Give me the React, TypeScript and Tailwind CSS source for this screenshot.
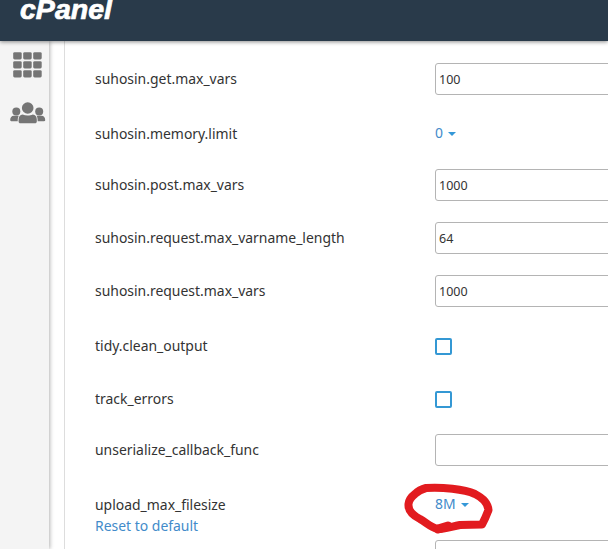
type Setting = {
  name: string;
  kind: "input" | "select" | "checkbox";
  value?: string;
  reset?: boolean;
  circled?: boolean;
};

const settings: Setting[] = [
  { name: "suhosin.get.max_vars", kind: "input", value: "100" },
  { name: "suhosin.memory.limit", kind: "select", value: "0" },
  { name: "suhosin.post.max_vars", kind: "input", value: "1000" },
  { name: "suhosin.request.max_varname_length", kind: "input", value: "64" },
  { name: "suhosin.request.max_vars", kind: "input", value: "1000" },
  { name: "tidy.clean_output", kind: "checkbox" },
  { name: "track_errors", kind: "checkbox" },
  { name: "unserialize_callback_func", kind: "input", value: "" },
  { name: "upload_max_filesize", kind: "select", value: "8M", reset: true, circled: true },
  { name: "", kind: "input", value: "" },
];

const Logo = () => (
  <svg className="ml-5 block" width="100" height="24" viewBox="0 0 100 24" aria-label="cPanel">
    <text
      x="0"
      y="19.3"
      textLength="92"
      lengthAdjust="spacingAndGlyphs"
      fill="#fff"
      stroke="#fff"
      strokeWidth="0.7"
      className="font-['Liberation_Sans',sans-serif] text-[27px] font-bold italic"
    >
      cPanel
    </text>
  </svg>
);

const GridIcon = () => (
  <svg width="29" height="26" viewBox="0 0 29 26" fill="#757575">
    {[0, 9, 18].map((y) =>
      [0, 10, 20].map((x) => (
        <rect key={`${x}-${y}`} x={x + 0.2} y={y + 0.2} width="8.5" height="7.3" rx="1.4" />
      ))
    )}
  </svg>
);

const UsersIcon = () => (
  <svg width="36" height="22" viewBox="0 0 36 22" fill="#757575">
    <circle cx="6.3" cy="9.4" r="4" />
    <circle cx="29.2" cy="9.4" r="4" />
    <path d="M3.8 13.8h5.1c-.8 1-1.2 2.6-1.2 5.4H1.3c-.8 0-1.1-.4-1.1-1.2 0-2.4 1.4-4.2 3.6-4.2z" />
    <path d="M31.6 13.8h-5.1c.8 1 1.2 2.6 1.2 5.4h6.4c.8 0 1.1-.4 1.1-1.2 0-2.4-1.4-4.2-3.6-4.2z" />
    <circle cx="17.7" cy="6" r="5.8" />
    <path d="M12.6 12.5c2.8 1.3 7.4 1.3 10.2 0 2.5 0 4 2.2 4 5.1v1.8c0 1.2-.7 1.8-1.8 1.8H10.4c-1.1 0-1.8-.6-1.8-1.8v-1.8c0-2.9 1.5-5.1 4-5.1z" />
  </svg>
);

const Scribble = () => (
  <svg
    className="absolute -left-[35px] -top-[8px]"
    width="96"
    height="60"
    viewBox="400 479 96 60"
    fill="none"
    stroke="#e21b1f"
    strokeWidth="8"
    strokeLinecap="round"
    strokeLinejoin="round"
  >
    <path d="M415 494C418 491 422 489 426 488C442 487 464 489 475 494C483 498 488 504 488.500 510C487 514 485 519 482 524.500L460 525C450 527 444 529 438 529C430 527 427 523 420 519C412 515 408 510 408.500 504C409 500 411 497 415 494Z" />
    <path d="M438 529L448 526" strokeWidth="9" />
  </svg>
);

const Control = ({ setting }: { setting: Setting }) => {
  if (setting.kind === "input") {
    return (
      <input
        type="text"
        defaultValue={setting.value}
        className="block h-8 w-[240px] rounded-[3px] border border-[#b4b4b4] bg-white px-[3px] pt-px text-[12.5px] text-[#333] outline-none"
      />
    );
  }
  if (setting.kind === "checkbox") {
    return (
      <button
        role="checkbox"
        aria-checked="false"
        aria-label={setting.name}
        className="mt-[10px] block size-[17px] rounded-[2px] border-2 border-[#3498d4]"
      />
    );
  }
  return (
    <div className="relative h-8 w-[240px]">
      <button className="flex h-[34px] items-center gap-[5px] text-[#428bca]">
        {setting.value}
        <svg className="mt-[2px]" width="8" height="4" viewBox="0 0 8 4" fill="#3498d8">
          <path d="M0 0h8L4 4z" />
        </svg>
      </button>
      {setting.circled && <Scribble />}
    </div>
  );
};

const SettingRow = ({ setting }: { setting: Setting }) => (
  <div className="flex h-8 shrink-0">
    <div className={`w-[340px] shrink-0 leading-[21px] ${setting.kind === "input" ? "pt-[5px]" : "pt-[7px]"}`}>
      <div>{setting.name}</div>
      {setting.reset && <a className="block text-[#428bca]">Reset to default</a>}
    </div>
    <Control setting={setting} />
  </div>
);

export default function App() {
  return (
    <div className="flex h-[549px] w-[608px] flex-col overflow-hidden bg-white font-['Noto_Sans','Open_Sans',sans-serif] text-[13.95px] text-[#333]">
      <header className="z-10 h-[41px] shrink-0 bg-[#293a4a] shadow-[0_1px_4px_rgba(0,0,0,0.45)]">
        <Logo />
      </header>
      <div className="flex min-h-0 flex-1">
        <aside className="flex w-[49px] shrink-0 flex-col items-start bg-[#f4f4f4] pt-[11px] shadow-[1px_0_4px_rgba(0,0,0,0.3)]">
          <div className="ml-[13px]">
            <GridIcon />
          </div>
          <div className="ml-[10px] mt-[24px]">
            <UsersIcon />
          </div>
        </aside>
        <main className="ml-[15px] flex min-w-0 flex-1 flex-col gap-[21px] overflow-hidden border-l border-[#ddd] pl-[30px] pt-[22px]">
          {settings.map((setting, i) => (
            <SettingRow key={i} setting={setting} />
          ))}
        </main>
      </div>
    </div>
  );
}
